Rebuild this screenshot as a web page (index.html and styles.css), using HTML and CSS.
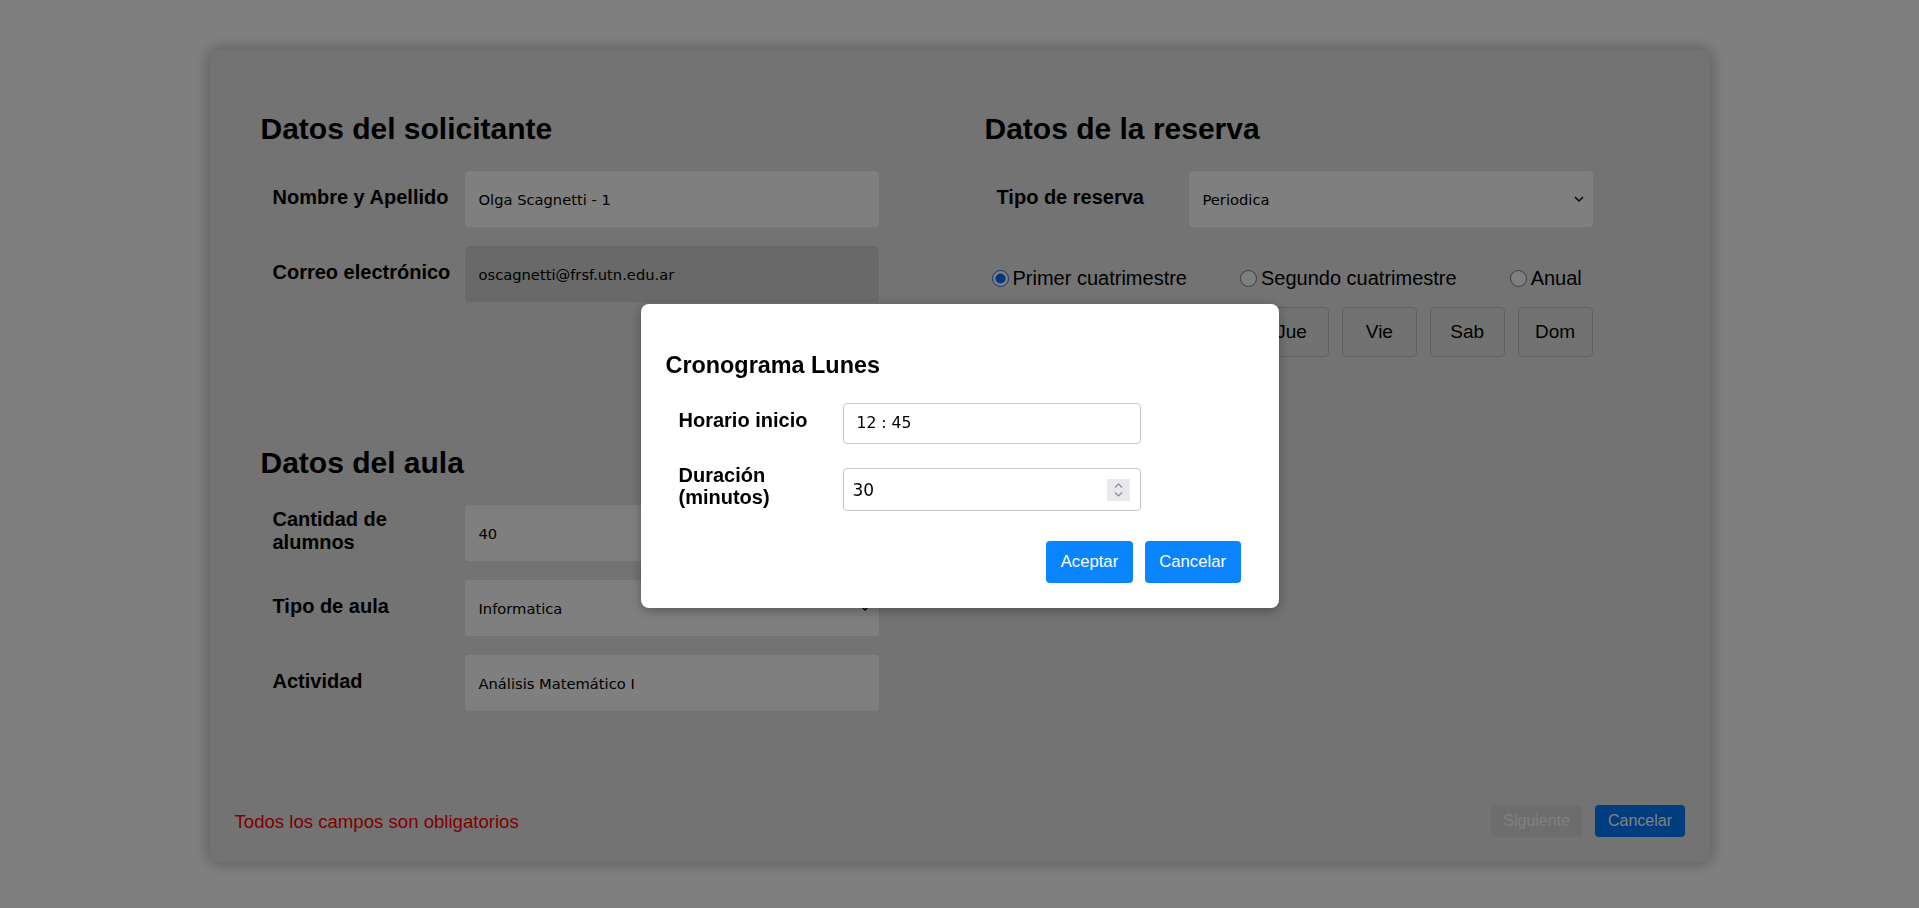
FILE: index.html
```html
<!DOCTYPE html>
<html lang="es">
<head>
<meta charset="utf-8">
<title>Reserva</title>
<link rel="stylesheet" href="styles.css">
</head>
<body>
<div class="page">
  <div class="card">
    <div class="card-body">
      <section class="col">
        <h2 class="section">Datos del solicitante</h2>
        <div class="row">
          <label class="lbl">Nombre y Apellido</label>
          <div class="field">Olga Scagnetti - 1</div>
        </div>
        <div class="row">
          <label class="lbl">Correo electrónico</label>
          <div class="field disabled">oscagnetti@frsf.utn.edu.ar</div>
        </div>
        <h2 class="section aula">Datos del aula</h2>
        <div class="row">
          <label class="lbl">Cantidad de alumnos</label>
          <div class="field">40</div>
        </div>
        <div class="row">
          <label class="lbl">Tipo de aula</label>
          <div class="field select"><span>Informatica</span>
            <svg class="chev" width="10" height="6" viewBox="0 0 10 6"><path d="M1 1l4 4 4-4" fill="none" stroke="#000" stroke-width="1.4"/></svg>
          </div>
        </div>
        <div class="row">
          <label class="lbl">Actividad</label>
          <div class="field">Análisis Matemático I</div>
        </div>
      </section>
      <section class="col">
        <h2 class="section">Datos de la reserva</h2>
        <div class="row">
          <label class="lbl">Tipo de reserva</label>
          <div class="field select"><span>Periodica</span>
            <svg class="chev" width="10" height="6" viewBox="0 0 10 6"><path d="M1 1l4 4 4-4" fill="none" stroke="#000" stroke-width="1.4"/></svg>
          </div>
        </div>
        <div class="radios">
          <label class="radio"><input type="radio" name="per" checked>Primer cuatrimestre</label>
          <label class="radio"><input type="radio" name="per">Segundo cuatrimestre</label>
          <label class="radio"><input type="radio" name="per">Anual</label>
        </div>
        <div class="days">
          <button class="day">Lun</button>
          <button class="day">Mar</button>
          <button class="day">Mie</button>
          <button class="day">Jue</button>
          <button class="day">Vie</button>
          <button class="day">Sab</button>
          <button class="day">Dom</button>
        </div>
      </section>
    </div>
    <div class="card-footer">
      <span class="req">Todos los campos son obligatorios</span>
      <div class="actions">
        <button class="btn btn-disabled">Siguiente</button>
        <button class="btn btn-primary">Cancelar</button>
      </div>
    </div>
  </div>
</div>

<div class="overlay">
  <div class="modal">
    <h3 class="mtitle">Cronograma Lunes</h3>
    <div class="mrow">
      <label class="mlbl">Horario inicio</label>
      <div class="mfield time">12 : 45</div>
    </div>
    <div class="mrow">
      <label class="mlbl">Duración (minutos)</label>
      <div class="mfield num"><span>30</span>
        <span class="spin"><svg width="23" height="22" viewBox="0 0 23 22"><path d="M8 8.5l3.5-3.5 3.5 3.5" fill="none" stroke="#8a8a8e" stroke-width="1.1"/><path d="M8 13.5l3.5 3.5 3.5-3.5" fill="none" stroke="#8a8a8e" stroke-width="1.1"/></svg></span>
      </div>
    </div>
    <div class="mactions">
      <button class="mbtn">Aceptar</button>
      <button class="mbtn">Cancelar</button>
    </div>
  </div>
</div>
</body>
</html>
```
FILE: styles.css
```css
html, body {
  margin: 0;
  height: 100%;
}

body {
  font-family: "Liberation Sans", Arial, sans-serif;
  font-size: 20px;
  color: #000;
  background: #fff;
}

.page {
  height: 100vh;
  box-sizing: border-box;
  padding-top: 4px;
  display: flex;
  align-items: center;
  justify-content: center;
}

.card {
  width: 1500px;
  height: 812px;
  background: #e6e6e6;
  border-radius: 8px;
  box-shadow: 0 0 16px rgba(0, 0, 0, 0.35);
  display: flex;
  flex-direction: column;
}

.card-body {
  flex: 1;
  padding: 62px 0 0 51px;
  display: grid;
  grid-template-columns: 618px 608px;
  column-gap: 106px;
  align-content: start;
}

.section {
  font-size: 30px;
  line-height: 34px;
  font-weight: bold;
  margin: 0 0 25px;
}

.section.aula {
  margin-top: 144px;
}

.row {
  display: flex;
  align-items: center;
  margin-bottom: 19px;
}

.lbl {
  width: 204px;
  flex: none;
  box-sizing: border-box;
  padding: 0 8px 0 12px;
  font-weight: bold;
  line-height: 23px;
  margin: -2px 0 2px;
}

.field {
  flex: 1;
  height: 56px;
  box-sizing: border-box;
  background: #fff;
  border-radius: 4px;
  display: flex;
  align-items: center;
  padding: 0 14px;
  font-family: "DejaVu Sans", Verdana, sans-serif;
  font-size: 14.7px;
}

.field.disabled {
  background: #d2d2d2;
}

.field.select {
  padding-right: 9px;
}

.chev {
  margin-left: auto;
}

.radios {
  display: flex;
  align-items: center;
  gap: 53px;
  margin-top: 39.6px;
  padding-left: 7px;
  line-height: 23px;
}

.radio {
  display: flex;
  align-items: center;
  gap: 4px;
}

.radio input {
  width: 17px;
  height: 17px;
  margin: 0;
  accent-color: #0b6cf0;
}

.days {
  display: flex;
  gap: 13px;
  margin: 17.7px 0 0 6px;
}

.day {
  flex: 1;
  height: 50px;
  background: #e4e4e4;
  border: 1px solid #bdbdbd;
  border-radius: 5px;
  font-family: "Liberation Sans", Arial, sans-serif;
  font-size: 19px;
  color: #000;
  padding: 0;
}

.card-footer {
  display: flex;
  align-items: center;
  padding: 0 25px 25px;
}

.req {
  flex: 1;
  color: #f00;
  font-size: 18.6px;
  line-height: 21px;
}

.actions {
  display: flex;
  gap: 13px;
}

.btn {
  height: 32px;
  padding: 0 12.5px;
  border: none;
  border-radius: 4px;
  font-family: "Liberation Sans", Arial, sans-serif;
  font-size: 16px;
}

.btn-primary {
  background: #007bff;
  color: #fff;
}

.btn-disabled {
  background: #dadada;
  color: #fff;
}

.overlay {
  position: fixed;
  inset: 0;
  box-sizing: border-box;
  padding-top: 4px;
  background: rgba(0, 0, 0, 0.5);
  display: flex;
  align-items: center;
  justify-content: center;
}

.modal {
  width: 638px;
  height: 304px;
  box-sizing: border-box;
  padding: 25px 38px 25px 25px;
  background: #fff;
  border-radius: 8px;
  box-shadow: 0 3px 12px rgba(0, 0, 0, 0.3);
}

.mtitle {
  font-size: 23.4px;
  line-height: 27px;
  font-weight: bold;
  margin: 23.4px 0;
}

.mrow {
  display: flex;
  align-items: center;
  padding-left: 13px;
  margin-bottom: 24px;
}

.mlbl {
  width: 164px;
  flex: none;
  box-sizing: border-box;
  padding-right: 10px;
  font-weight: bold;
  line-height: 22px;
  margin: -3.5px 0 3.5px;
}

.mfield {
  width: 298px;
  box-sizing: border-box;
  border: 1px solid #c9c9c9;
  border-radius: 4px;
  display: flex;
  align-items: center;
  font-family: "DejaVu Sans", Verdana, sans-serif;
}

.mfield.time {
  height: 41px;
  padding-left: 13px;
  font-size: 15.6px;
}

.mfield.num {
  height: 43px;
  padding: 0 10px 0 9px;
  font-size: 17px;
}

.spin {
  margin-left: auto;
  width: 23px;
  height: 22px;
  background: #e9e9ed;
  display: flex;
}

.mactions {
  display: flex;
  justify-content: flex-end;
  gap: 12px;
  margin-top: 29px;
}

.mbtn {
  height: 42px;
  padding: 0 14.5px;
  border: none;
  border-radius: 4px;
  background: #0a84ff;
  color: #fff;
  font-family: "Liberation Sans", Arial, sans-serif;
  font-size: 16.7px;
}
```
